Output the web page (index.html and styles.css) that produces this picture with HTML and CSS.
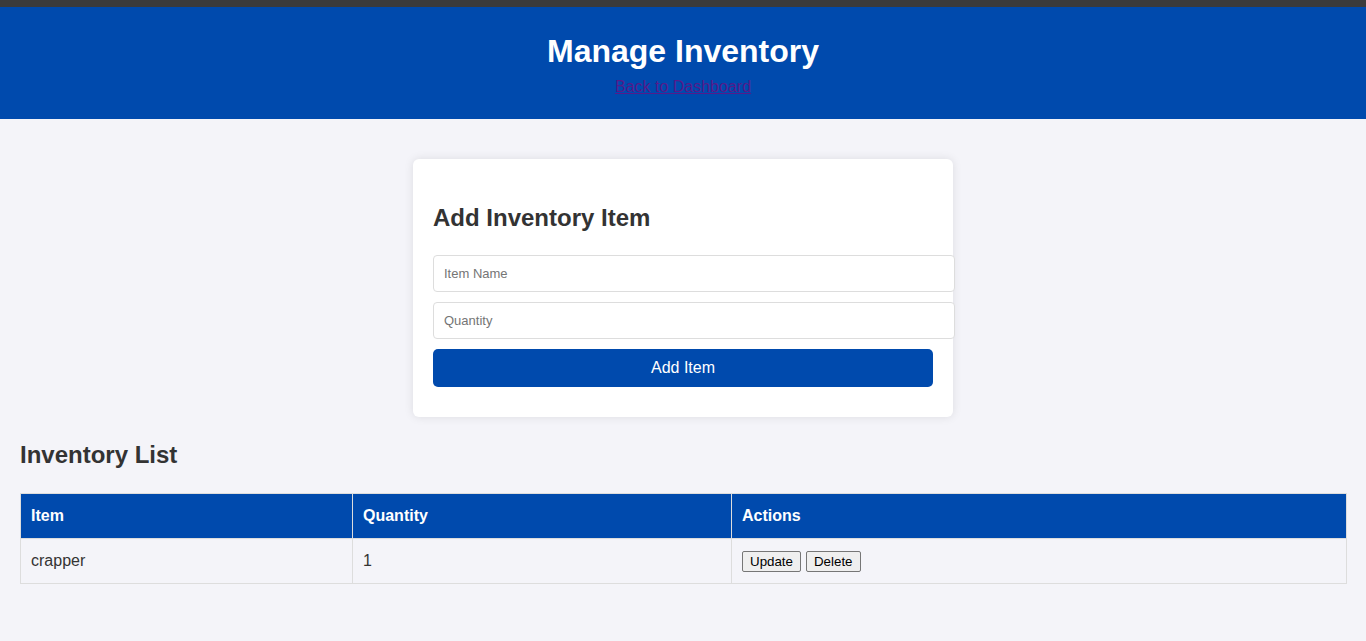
FILE: index.html
```html
<!DOCTYPE html>
<html lang="en">
<head>
<meta charset="utf-8">
<title>Manage Inventory</title>
<link rel="stylesheet" href="styles.css">
</head>
<body>
<div class="topbar"></div>
<header class="header">
  <h1 class="header-title">Manage Inventory</h1>
  <a class="header-link" href="#dashboard">Back to Dashboard</a>
</header>
<main class="main">
  <section class="card">
    <h2 class="card-title">Add Inventory Item</h2>
    <form class="form">
      <input class="field" type="text" placeholder="Item Name">
      <input class="field" type="text" placeholder="Quantity">
      <button class="submit" type="button">Add Item</button>
    </form>
  </section>
  <h2 class="list-title">Inventory List</h2>
  <table class="table">
    <colgroup>
      <col class="col-item">
      <col class="col-qty">
      <col class="col-actions">
    </colgroup>
    <thead>
      <tr><th>Item</th><th>Quantity</th><th>Actions</th></tr>
    </thead>
    <tbody>
      <tr>
        <td>crapper</td>
        <td>1</td>
        <td class="actions"><div class="action-group"><button class="btn" type="button">Update</button><button class="btn" type="button">Delete</button></div></td>
      </tr>
    </tbody>
  </table>
</main>
</body>
</html>
```
FILE: styles.css
```css
* { box-sizing: content-box; }
html, body { margin: 0; padding: 0; }
body {
  background: #f4f4f9;
  font-family: "Liberation Sans", Arial, sans-serif;
  color: #333;
}
.topbar { height: 7px; background: #3b3b3b; }
.header {
  background: #004aad;
  color: #fff;
  text-align: center;
  padding: 26px 0 23px;
}
.header-title {
  margin: 0 0 7px;
  font-size: 32px;
  line-height: 37px;
  font-weight: bold;
}
.header-link {
  display: inline-block;
  color: #551a8b;
  font-size: 16px;
  line-height: 19px;
  text-decoration: underline;
}
.main { padding: 40px 20px 40px; }
.card {
  width: 500px;
  margin: 0 auto;
  background: #fff;
  padding: 45px 20px 30px;
  border-radius: 6px;
  box-shadow: 0 0 10px rgba(0,0,0,0.1);
}
.card-title {
  margin: 0 0 23px;
  font-size: 24px;
  line-height: 28px;
  font-weight: bold;
  color: #333;
}
.form { display: flex; flex-direction: column; align-items: flex-start; }
.field {
  width: 500px;
  padding: 10px;
  margin: 0 0 10px;
  border: 1px solid #ddd;
  border-radius: 4px;
  font-family: "Liberation Sans", Arial, sans-serif;
  font-size: 13px;
  line-height: 15px;
  color: #333;
  background: #fff;
}
.field::placeholder { color: #757575; }
.submit {
  width: 500px;
  padding: 10px;
  box-sizing: border-box;
  height: 38px;
  border: none;
  border-radius: 5px;
  background: #004aad;
  color: #fff;
  font-family: "Liberation Sans", Arial, sans-serif;
  font-size: 16px;
  line-height: 18px;
}
.list-title {
  margin: 24px 0 24px;
  font-size: 24px;
  line-height: 28px;
  font-weight: bold;
  color: #333;
}
.table {
  width: 100%;
  border-collapse: collapse;
  font-size: 16px;
}
.col-item { width: 332px; }
.col-qty { width: 379px; }
.table th, .table td {
  border: 1px solid #ddd;
  padding: 13px 10px;
  line-height: 18px;
  text-align: left;
}
.table th {
  background: #004aad;
  color: #fff;
  font-weight: bold;
}
.table td { color: #333; }
.table td.actions { padding-top: 12px; padding-bottom: 11px; }
.action-group { display: flex; gap: 5px; align-items: center; }
.btn {
  font-family: "Liberation Sans", Arial, sans-serif;
  font-size: 13.33px;
  line-height: 17px;
  padding: 1px 7px;
  border: 1px solid #767676;
  border-radius: 2px;
  background: #efefef;
  color: #000;
}
```
